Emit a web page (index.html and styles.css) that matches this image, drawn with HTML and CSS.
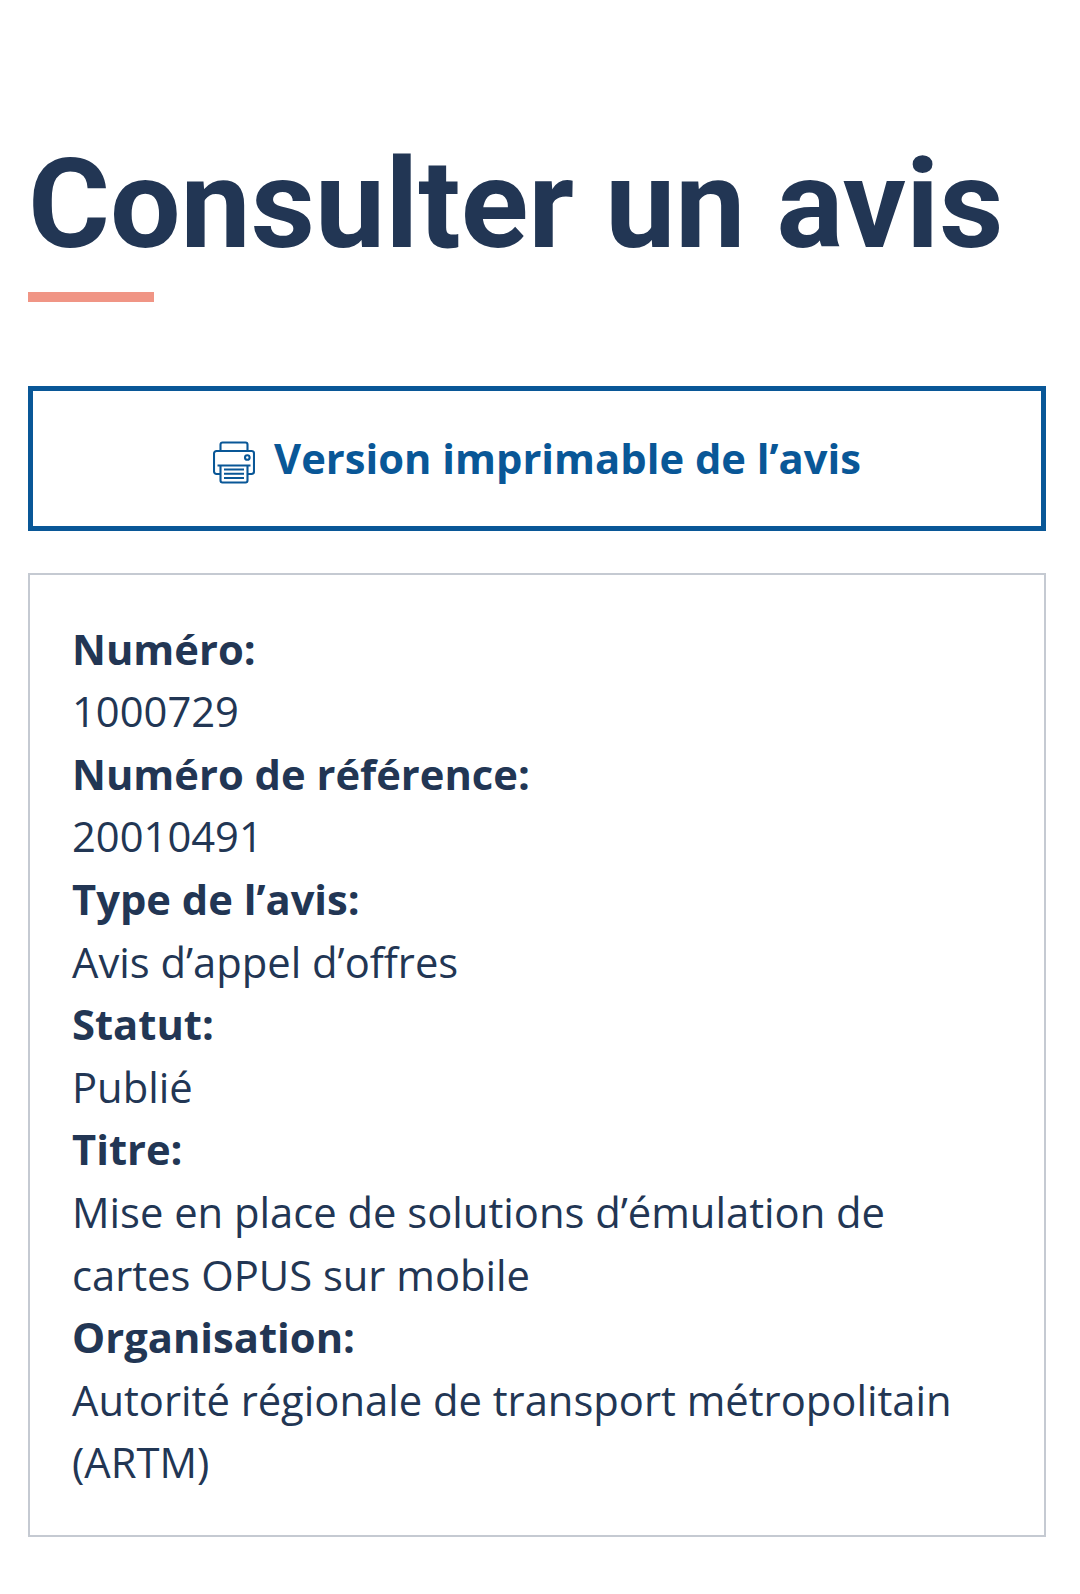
FILE: index.html
```html
<!DOCTYPE html>
<html lang="fr">
<head>
    <meta charset="UTF-8">
    <meta name="viewport" content="width=device-width, initial-scale=1.0">
    <title>Consulter un avis</title>
    <link rel="stylesheet" href="styles.css">
</head>
<body>
    <main class="container">
        <h1 class="page-title">Consulter un avis</h1>

        <a class="btn-print" href="#">
            <svg class="icon-print" viewBox="0 0 42 43" aria-hidden="true">
                <path d="M7.5 10V3.5a2 2 0 0 1 2-2h23a2 2 0 0 1 2 2V10"/>
                <path d="M7.5 33H3.5a2.5 2.5 0 0 1-2.5-2.5V12.5A2.5 2.5 0 0 1 3.5 10h35a2.5 2.5 0 0 1 2.5 2.5v18a2.5 2.5 0 0 1-2.5 2.5h-4"/>
                <path d="M4.5 24.5h33M7.5 24.5v15a2 2 0 0 0 2 2h23a2 2 0 0 0 2-2v-15"/>
                <path d="M11 28.5h20M11 32.8h20M11 37h20"/>
                <circle cx="34.3" cy="16.5" r="2.3"/>
            </svg>
            <span>Version imprimable de l’avis</span>
        </a>

        <dl class="notice">
            <dt>Numéro:</dt>
            <dd>1000729</dd>
            <dt>Numéro de référence:</dt>
            <dd>20010491</dd>
            <dt>Type de l’avis:</dt>
            <dd>Avis d’appel d’offres</dd>
            <dt>Statut:</dt>
            <dd>Publié</dd>
            <dt>Titre:</dt>
            <dd>Mise en place de solutions d’émulation de cartes OPUS sur mobile</dd>
            <dt>Organisation:</dt>
            <dd>Autorité régionale de transport métropolitain (ARTM)</dd>
        </dl>
    </main>
</body>
</html>
```
FILE: styles.css
```css
* {
    box-sizing: border-box;
    margin: 0;
    padding: 0;
}
body {
    font-family: "Open Sans", sans-serif;
    font-size: 41.73px;
    color: #223654;
    background-color: #fff;
}
.container {
    padding: 130px 34px 0 28px;
}
.page-title {
    font-family: Roboto, sans-serif;
    font-size: 125.2px;
    font-weight: 700;
    line-height: 150px;
    white-space: nowrap;
}
.page-title::after {
    content: "";
    display: block;
    width: 126px;
    height: 10px;
    margin-top: 12px;
    background-color: #f09585;
}
.btn-print {
    display: flex;
    justify-content: center;
    align-items: center;
    height: 145px;
    margin-top: 84px;
    padding-bottom: 2px;
    border: 5px solid #095797;
    color: #095797;
    font-weight: 700;
    text-decoration: none;
}
.icon-print {
    width: 42px;
    height: 43px;
    margin: 9px 19px 0 0;
    fill: none;
    stroke: currentColor;
    stroke-width: 2.1;
}
.notice {
    margin-top: 42px;
    padding: 42.6px 42px 41px;
    border: 2px solid #c5cad2;
    line-height: 62.6px;
}
.notice dt {
    font-weight: 700;
}
```
